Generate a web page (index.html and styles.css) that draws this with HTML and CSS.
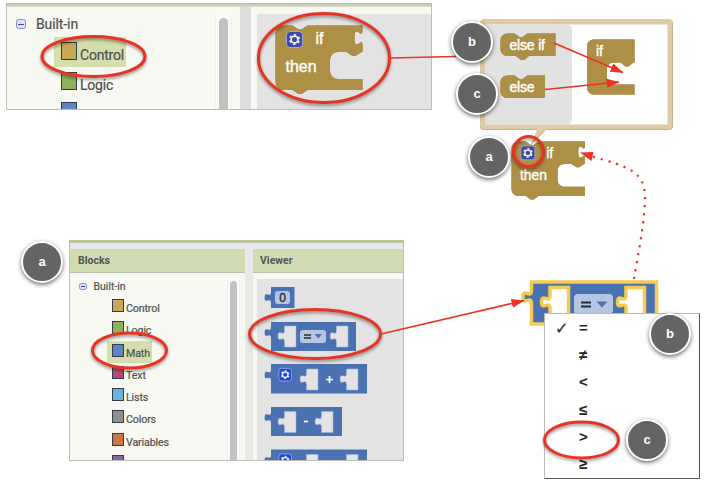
FILE: index.html
```html
<!DOCTYPE html>
<html lang="en">
<head>
<meta charset="utf-8">
<title>Control and Math blocks</title>
<link rel="stylesheet" href="styles.css">
</head>
<body>
<svg class="defs" width="0" height="0" aria-hidden="true">
  <defs>
    <path id="if-block" d="M0,8a8,8 0 0 1 8,-8h9l6,4h3l6,-4H87v5c0,10 -8,-8 -8,7.5s8,-2.5 8,7.5V26.500h-1l-6,4h-3l-6,-4h-8.500a8,8 0 0 0 -8,8v11a8,8 0 0 0 8,8H87v11H32l-6,4h-3l-6,-4H8a8,8 0 0 1 -8,-8z"/>
    <path id="socket" d="M0,0H11.500V21H0V16c0,-8 -6.400,2 -6.400,-6s6.400,2 6.400,-6z"/>
    <g id="gear">
      <rect x="0.500" y="0.500" width="16" height="16" rx="3.500"/>
      <circle class="gear-teeth" cx="8.500" cy="8.500" r="4.700"/>
      <circle class="gear-ring" cx="8.500" cy="8.500" r="3.400"/>
    </g>
    <marker id="head" markerUnits="userSpaceOnUse" markerWidth="14" markerHeight="10" refX="12.500" refY="4.500" orient="auto"><path d="M0,0L13,4.500 0,9z"/></marker>
  </defs>
</svg>

<main class="stage">
  <section class="panel panel-top">
    <div class="column tree">
      <div class="tree-list">
        <div class="root"><i class="toggle"></i>Built-in</div>
        <div class="item selected"><i class="swatch control"></i><span>Control</span></div>
        <div class="item"><i class="swatch logic"></i><span>Logic</span></div>
        <div class="item"><i class="swatch math"></i></div>
      </div>
      <div class="scroll"><i></i></div>
    </div>
    <div class="column viewer">
      <svg class="workspace" viewBox="257 14 174 95" width="174" height="95">
        <g class="control-block" transform="translate(275.500 25.500)">
          <use href="#if-block"/>
          <g class="gear violet" transform="translate(10.500 5.500)"><use href="#gear"/></g>
          <text x="40" y="18.500" font-size="16">if</text><text x="10" y="46" font-size="16">then</text>
        </g>
      </svg>
    </div>
  </section>

  <section class="panel panel-bottom">
    <div class="column tree">
      <h2>Blocks</h2>
      <div class="tree-body">
        <div class="tree-list">
          <div class="root"><i class="toggle"></i>Built-in</div>
          <div class="item"><i class="swatch control"></i><span>Control</span></div>
          <div class="item"><i class="swatch logic"></i><span>Logic</span></div>
          <div class="item selected"><i class="swatch math"></i><span>Math</span></div>
          <div class="item"><i class="swatch text"></i><span>Text</span></div>
          <div class="item"><i class="swatch lists"></i><span>Lists</span></div>
          <div class="item"><i class="swatch colors"></i><span>Colors</span></div>
          <div class="item"><i class="swatch variables"></i><span>Variables</span></div>
          <div class="item"><i class="swatch procedures"></i></div>
        </div>
        <div class="scroll"><i></i></div>
      </div>
    </div>
    <div class="column viewer">
      <h2>Viewer</h2>
      <svg class="workspace" viewBox="257 279 146 181" width="146" height="181">
        <g class="math-block">
          <path d="M271,287h23.500v21H271v-4.500c0,-8 -6.400,2 -6.400,-6s6.400,2 6.400,-6z"/>
          <rect class="field" x="275" y="291" width="15" height="13" rx="3"/>
          <text class="dark" x="282.500" y="301.500" font-size="12" text-anchor="middle">0</text>
        </g>
        <g class="math-block">
          <path d="M271,322h85v29h-85v-12.500c0,-8 -6.400,2 -6.400,-6s6.400,2 6.400,-6z"/>
          <use class="hole" href="#socket" x="284.500" y="326"/><use class="hole" href="#socket" x="336.500" y="326"/>
          <rect class="field" x="300" y="330" width="26" height="13" rx="3"/>
          <path class="equals" d="M304,335h7M304,338h7"/><path d="M314.500,334h7.500l-3.750,4.500z"/>
        </g>
        <g class="math-block">
          <path d="M271,364h96v29.500h-96V381c0,-8 -6.400,2 -6.400,-6s6.400,2 6.400,-6z"/>
          <g class="gear blue" transform="translate(278.500 368) scale(.79)"><use href="#gear"/></g>
          <use class="hole" href="#socket" x="306.500" y="369"/><use class="hole" href="#socket" x="346.500" y="369"/>
          <path class="sign" d="M326,379.500h7M329.500,376v7"/>
        </g>
        <g class="math-block">
          <path d="M271,407h71v29h-71v-12.500c0,-8 -6.400,2 -6.400,-6s6.400,2 6.400,-6z"/>
          <use class="hole" href="#socket" x="284.500" y="411.500"/><use class="hole" href="#socket" x="321.500" y="411.500"/>
          <path class="sign" d="M304,421.500h4"/>
        </g>
        <g class="math-block">
          <path d="M271,449.500h96V479h-96v-12.500c0,-8 -6.400,2 -6.400,-6s6.400,2 6.400,-6z"/>
          <g class="gear blue" transform="translate(278.500 453.500) scale(.79)"><use href="#gear"/></g>
          <use class="hole" href="#socket" x="306.500" y="454.500"/><use class="hole" href="#socket" x="346.500" y="454.500"/>
        </g>
      </svg>
    </div>
  </section>

  <svg class="canvas" viewBox="0 0 706 486" width="706" height="486">
    <g class="control-block" transform="translate(511.500 141.500) scale(.845)">
      <use href="#if-block"/>
      <text x="41" y="19" font-size="16.500">if</text><text x="10" y="45" font-size="16.500">then</text>
    </g>
    <path class="bubble" fill-rule="evenodd" d="M484,19H669a4,4 0 0 1 4,4V126a4,4 0 0 1 -4,4H546L530,146 537,130H484a4,4 0 0 1 -4,-4V23a4,4 0 0 1 4,-4z"/>
    <path class="bubble-shade" d="M480.500,126.500q0,3 3,3H537M546,129.500H669q3.500,0 3.500,-3.500V23M545,130L530,146"/>
    <rect x="485.500" y="24.500" width="182" height="100" fill="#fff"/>
    <path class="flyout" d="M485.500,24.500H567a5,5 0 0 1 5,5V119.500a5,5 0 0 1 -5,5H485.500z"/>
    <g class="gear violet" transform="translate(520.500 145.500) scale(.87)"><use href="#gear"/></g>
    <g class="control-block">
      <path d="M500.500,40a6.500,6.500 0 0 1 6.500,-6.500h7.500l5,3.500h3l5,-3.500h28V56H529l-5,4h-3l-5,-4h-9a6.500,6.500 0 0 1 -6.500,-6.500z"/>
      <path d="M500.500,82a6.500,6.500 0 0 1 6.500,-6.500h7.500l5,3.500h3l5,-3.500H545V98H507a6.500,6.500 0 0 1 -6.500,-6.500z"/>
      <path d="M587,46a6.500,6.500 0 0 1 6.500,-6.500H634.500V62.500h-1l-5,4h-3l-5,-4h-7a6.500,6.500 0 0 0 -6.500,6.500v9a6.500,6.500 0 0 0 6.500,6.500h21V94.500h-41a6.500,6.500 0 0 1 -6.500,-6.500z"/>
      <text x="509.500" y="50" font-size="14" textLength="35.500">else if</text>
      <text x="509.500" y="92" font-size="14" textLength="25">else</text>
      <text x="596" y="55.500" font-size="14">if</text>
    </g>
    <g class="math-block picked">
      <path d="M531.500,282H656.500V324h-125V304c0,-10 -8.500,2.500 -8.500,-7s8.500,2.500 8.500,-7z"/>
      <path class="hole" d="M550,287.500h18.500V319H550v-10c0,-10 -8.500,2.500 -8.500,-7s8.500,2.500 8.500,-7zM626,287.500h18.500V319H626v-10c0,-10 -8.500,2.500 -8.500,-7s8.500,2.500 8.500,-7z"/>
      <rect class="field" x="574" y="294" width="39" height="20" rx="4"/>
      <path class="equals" d="M581,302.500h10M581,306.500h10"/><path class="caret" d="M596.500,301.500h11l-5.500,6z"/>
    </g>
  </svg>

  <ul class="menu">
    <li><b>✓</b>=</li><li>≠</li><li>&lt;</li><li>≤</li><li>&gt;</li><li>≥</li>
  </ul>

  <svg class="canvas marks" viewBox="0 0 706 486" width="706" height="486">
    <g class="rings">
      <ellipse cx="93.500" cy="56.500" rx="51.500" ry="20"/>
      <ellipse cx="324" cy="58" rx="65.500" ry="44.500"/>
      <circle cx="528.500" cy="151.500" r="15"/>
      <ellipse cx="129.500" cy="350.500" rx="37" ry="17.500"/>
      <ellipse cx="315" cy="334" rx="65.500" ry="24.500"/>
      <ellipse cx="581.500" cy="440" rx="37" ry="18"/>
    </g>
    <g class="arrows">
      <path d="M390,58L456,56.500"/>
      <path marker-end="url(#head)" d="M554,43L623,72.500"/>
      <path marker-end="url(#head)" d="M545,89.500L619,82"/>
      <path marker-end="url(#head)" d="M381,334L524,300.500"/>
      <path class="dots" d="M634,279C638,254 645,222 645,196C644,172 630,167 592,156.500"/>
      <path class="tip" d="M580,152.500L593.500,152 591.500,161z"/>
    </g>
  </svg>

  <span class="badge at-bubble-b">b</span>
  <span class="badge at-bubble-c">c</span>
  <span class="badge at-block-a">a</span>
  <span class="badge at-panel-a">a</span>
  <span class="badge at-menu-b">b</span>
  <span class="badge at-menu-c">c</span>
</main>
</body>
</html>
```

FILE: styles.css
```css
* { box-sizing: border-box; }
body { margin: 0; background: #fff; font-family: Roboto, sans-serif; color: #505050; }
.defs { position: absolute; }
.stage { position: relative; width: 706px; height: 486px; overflow: hidden; }

/* screen panels */
.panel { position: absolute; display: flex; overflow: hidden; }
.panel::after { content: ""; position: absolute; inset: 0; border: 1px solid #bdbdbd; }
.column { background: #f8f9f3; overflow: hidden; }
.workspace { display: block; background: #e3e3e3; }
.tree-list { flex: 1; -webkit-text-stroke: .2px #505050; }
.root, .item { display: flex; }
.toggle { position: relative; border: 1px solid #8790cf; border-radius: 2.500px; background: #dfe2f3; }
.toggle::after { content: ""; position: absolute; left: 1px; right: 1px; top: calc(50% - .5px); height: 1px; background: #3c43bd; }
.swatch { border: 1.500px solid #353b4b; flex: none; }
.control { background: #c9a858; }
.logic { background: #8fb25d; }
.math { background: #5a86c2; }
.text { background: #b94b72; }
.lists { background: #68b3d9; }
.colors { background: #8f8f8f; }
.variables { background: #cd7645; }
.procedures { background: #8a659c; }
.selected { background: #d5dfab; }
.scroll { border: solid #efefef; border-width: 0 1px; background: #fafafa; }
.scroll i { display: block; height: 100%; margin: 0 auto; background: #c1c1c1; border-radius: 5px 5px 0 0; }

.panel-top { left: 6px; top: 3px; width: 426px; height: 107px; gap: 11px; background: #dedede; }
.panel-top::before { content: ""; position: absolute; inset: 0 0 auto; height: 4px; background: linear-gradient(#bbb, #c9ceb4 50%, #d9dfc7); }
.panel-top .tree { width: 234px; display: flex; padding: 11px 8px 0 0; }
.panel-top .viewer { width: 181px; padding: 11px 0 0 6px; }
.panel-top .root { height: 23px; padding-left: 10px; gap: 10px; font-size: 14px; line-height: 20px; letter-spacing: -.1px; }
.panel-top .toggle { width: 10px; height: 10px; margin-top: 5px; }
.panel-top .item { width: 72px; height: 30px; margin-left: 48px; padding: 5px 0 0 7px; gap: 3px; font-size: 14px; line-height: 26px; letter-spacing: -.2px; }
.panel-top .swatch { width: 16px; height: 18px; }
.panel-top .scroll { width: 17px; padding-top: 4px; }
.panel-top .scroll i { width: 9px; }

.panel-bottom { left: 69px; top: 240px; width: 335px; height: 221px; gap: 8px; padding: 7px 0 0 1px; background: #e8e8e8; border-top: 2px solid #b7ca83; }
.panel-bottom h2 { height: 24px; margin: 0; padding-left: 8px; background: #d0dbb2; border-bottom: 1px solid #b9bead; font-size: 10.500px; line-height: 23px; font-weight: 700; color: #545454; }
.panel-bottom .tree { width: 175px; }
.panel-bottom .viewer { width: 151px; }
.panel-bottom .viewer h2 { padding-left: 7px; }
.panel-bottom .workspace { margin: 6px 0 0 4px; }
.tree-body { display: flex; padding: 6px 5px 0 0; height: 188px; overflow: hidden; }
.panel-bottom .root { height: 17px; padding-left: 9px; gap: 6.500px; font-size: 10.500px; line-height: 15px; }
.panel-bottom .toggle { width: 8px; height: 7px; margin-top: 4px; }
.panel-bottom .item { width: 45px; height: 22.300px; margin-left: 37px; padding: 3px 0 0 5px; gap: 2px; font-size: 10.700px; line-height: 19px; letter-spacing: -.15px; }
.panel-bottom .swatch { width: 12px; height: 13px; border-width: 1px; }
.panel-bottom .scroll { width: 13px; padding-top: 2px; }
.panel-bottom .scroll i { width: 7px; }

/* blocks */
.canvas { position: absolute; inset: 0; overflow: visible; }
.control-block { fill: #ad9046; }
.control-block text { fill: #fff; stroke: #fff; stroke-width: .4px; font-family: "Liberation Sans", sans-serif; }
.control-block > path, .control-block > use { filter: drop-shadow(.5px .7px 0 #907635); }
.gear-teeth { fill: none; stroke: #eee; stroke-width: 1.800px; stroke-dasharray: 2.300 2.622; stroke-dashoffset: -1.300; }
.gear-ring { fill: none; stroke: #eee; stroke-width: 1.700px; }
.violet { fill: #3d49a9; stroke: #9fa3d7; }
.blue { fill: #1e43df; stroke: #9ab3f0; }
.bubble { fill: #dfcba6; }
.bubble-shade { fill: none; stroke: #c7b38f; }
.flyout { fill: #e2e2e2; }
.math-block { fill: #4a72b0; }
.hole { fill: #e3e3e3; stroke: #9eb7dc; stroke-width: .6px; }
.field { fill: #b5c6e3; }
.dark { fill: #222; stroke: #222; stroke-width: .3px; font-family: "Liberation Sans", sans-serif; }
.equals { fill: none; stroke: #282828; stroke-width: 1.500px; }
.sign { fill: none; stroke: #fff; stroke-width: 1.700px; }
.picked > path:first-child { stroke: #f5cb51; stroke-width: 3.500px; }
.picked .hole { fill: #fff; stroke: #f5cb51; stroke-width: 3.500px; }
.picked .equals { stroke-width: 2px; }

/* operator menu */
.menu { position: absolute; left: 544px; top: 313px; width: 156px; height: 166px; margin: 0; padding: 0; list-style: none; background: #fff; border: 1px solid #bbb; border-right: 1.500px solid #555; border-bottom: 1.500px solid #555; }
.menu li { display: flex; height: 27.200px; padding-left: 34px; font: bold 15px/28px "Liberation Sans", sans-serif; color: #222; }
.menu b { width: 24px; margin-left: -24px; font: 16px/29px "DejaVu Sans", sans-serif; color: #333; -webkit-text-stroke: .3px #333; }

/* annotations */
.rings { fill: none; stroke: #e83323; stroke-width: 3px; filter: drop-shadow(0 2px 1.500px rgba(0, 0, 0, .4)); }
.arrows { fill: none; stroke: #ed3223; stroke-width: 1.700px; }
.dots { stroke-width: 2.200px; stroke-dasharray: 2.200 5.850; }
.tip, #head path { fill: #ed3223; stroke: none; }
.badge { position: absolute; width: 42px; height: 42px; border: 2.500px solid #fff; border-radius: 50%; background: #646464; color: #fff; text-align: center; font: bold 13px/38px "Liberation Sans", sans-serif; box-shadow: 0 1.500px 4px rgba(0, 0, 0, .6); }
.at-bubble-b { left: 451px; top: 21px; }
.at-bubble-c { left: 456px; top: 73px; }
.at-block-a { left: 468px; top: 136px; }
.at-panel-a { left: 21px; top: 241px; }
.at-menu-b { left: 649px; top: 313px; }
.at-menu-c { left: 626px; top: 419px; }
```
